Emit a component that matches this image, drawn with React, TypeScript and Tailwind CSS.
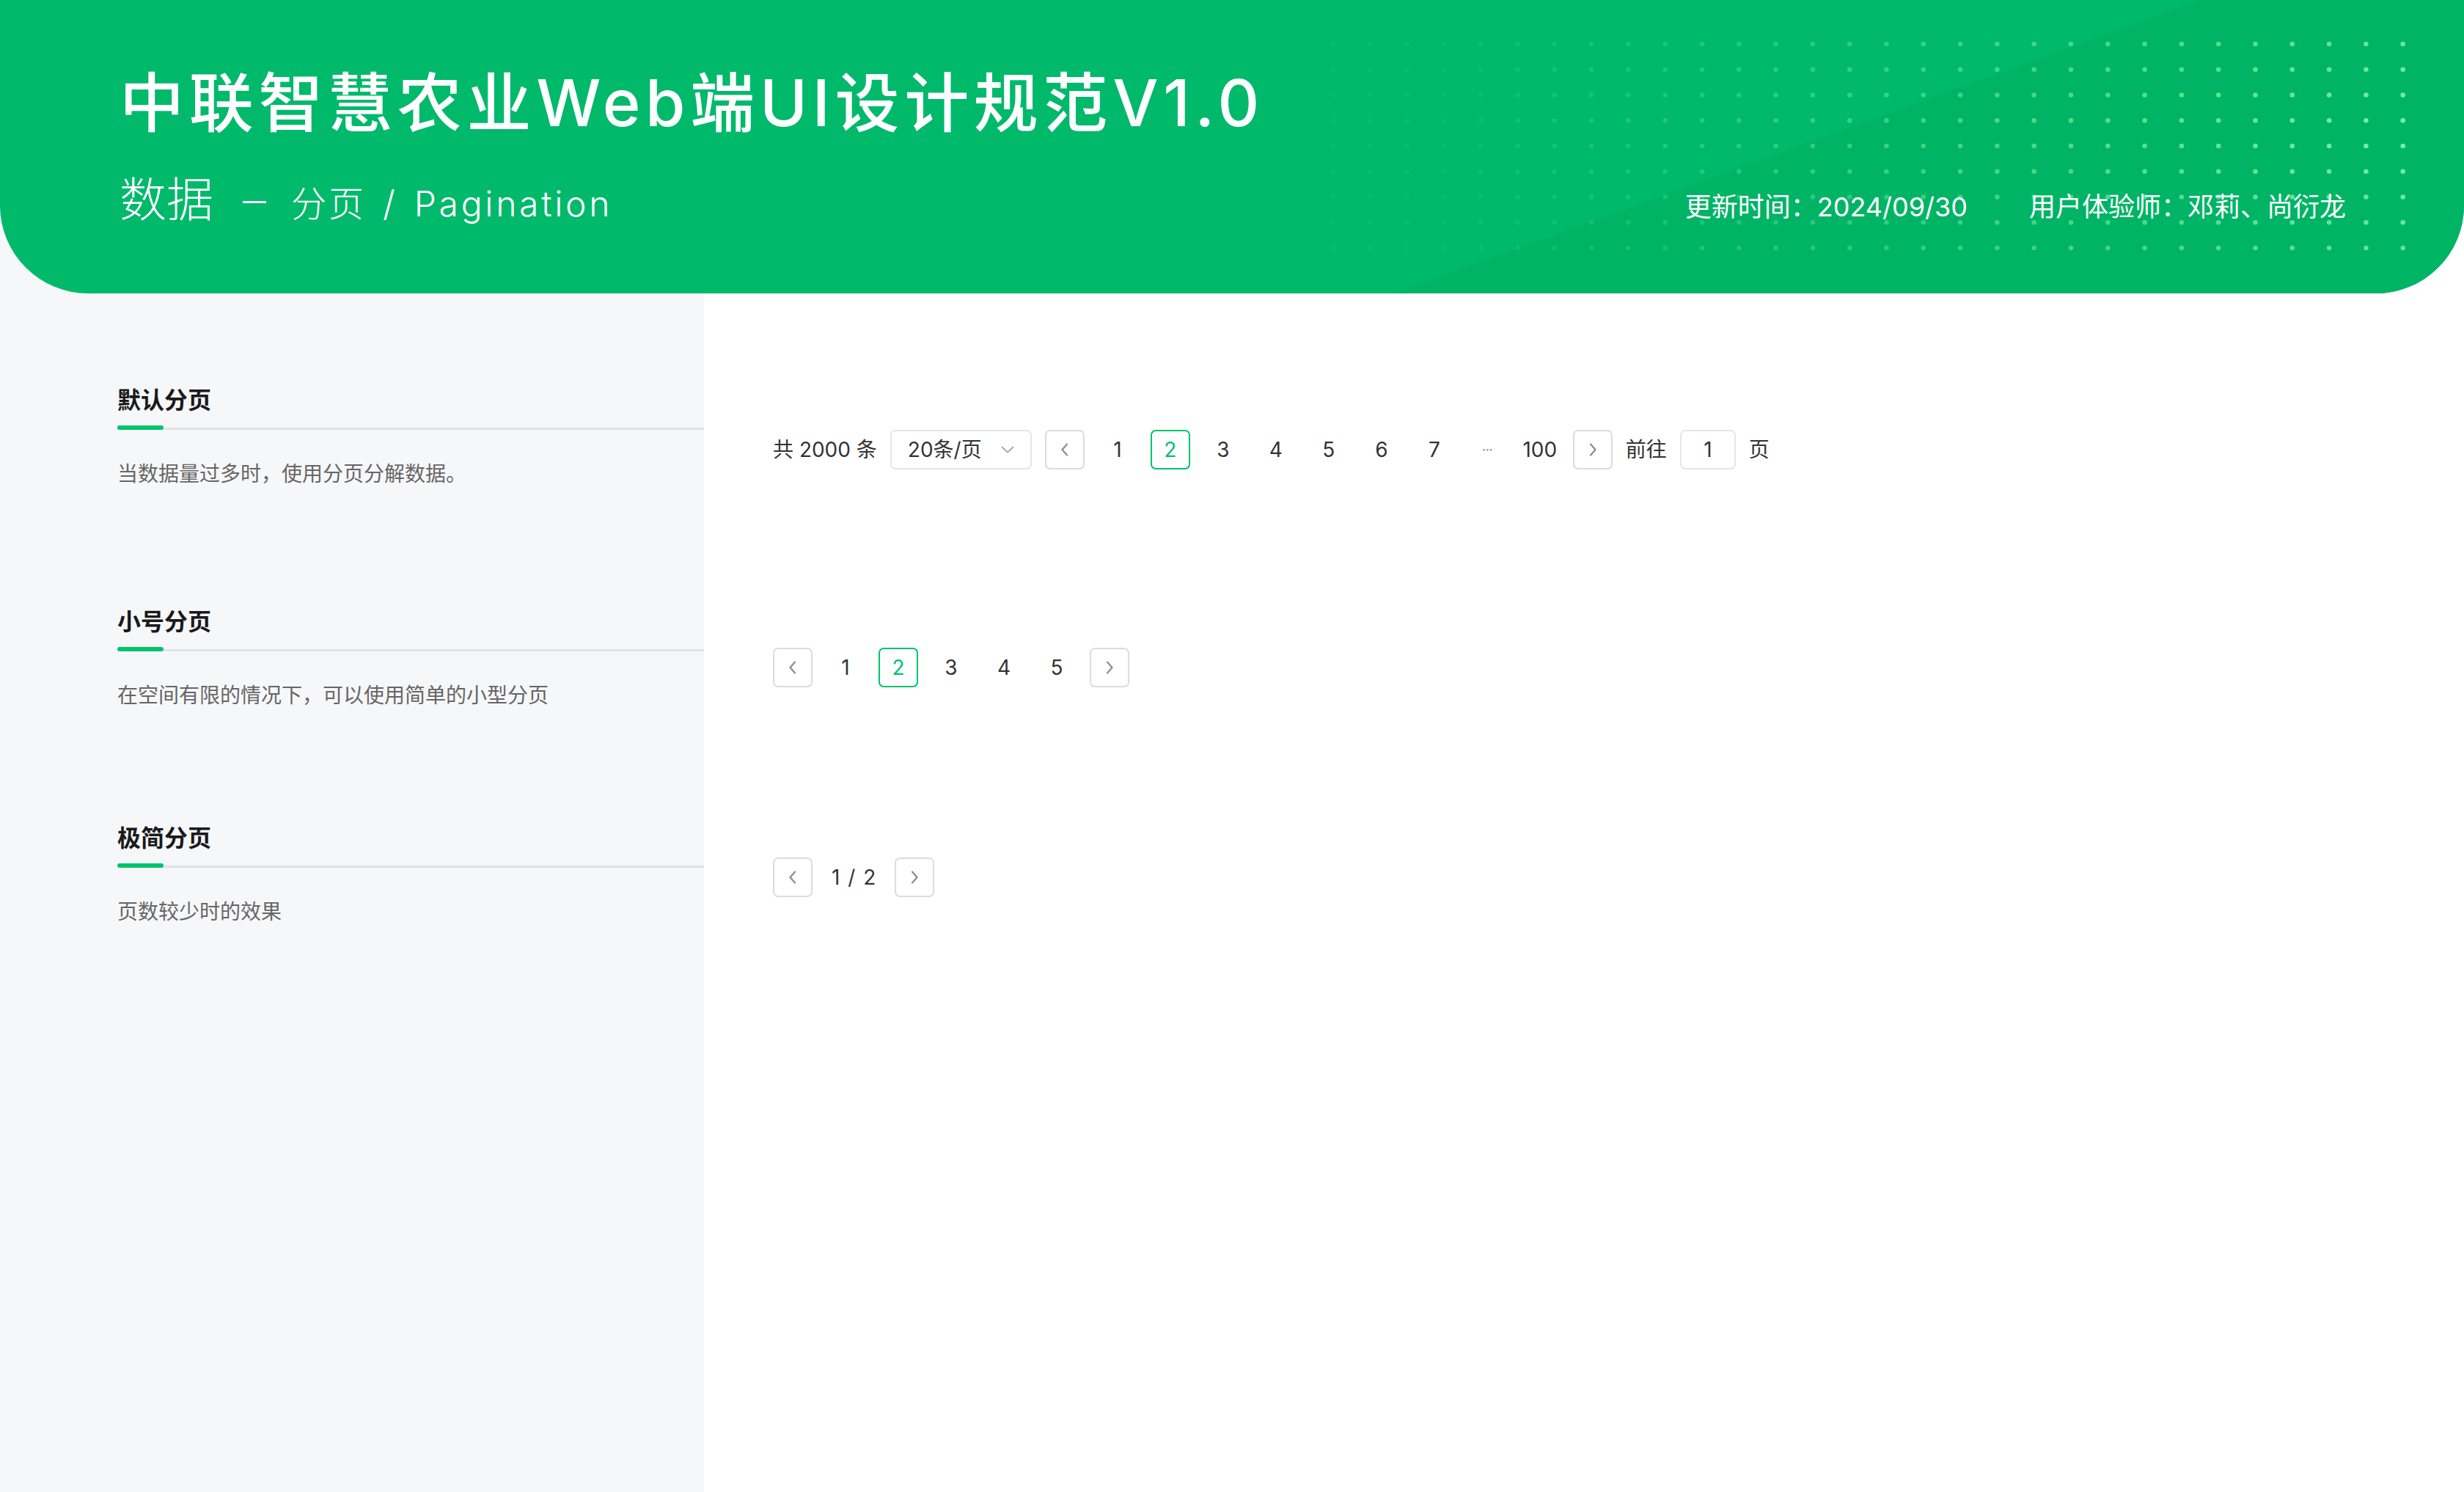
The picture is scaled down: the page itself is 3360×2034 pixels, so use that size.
import React from 'react'

// decorative dot matrix + diagonal shade in the top-right of the banner
const HeaderDecor: React.FC = () => {
  const cols = 30
  const rows = 9
  const dots: React.ReactElement[] = []
  for (let r = 0; r < rows; r++) {
    for (let c = 0; c < cols; c++) {
      const t = c / (cols - 1)
      const fade = 1 - 0.2 * Math.abs(r - 3.5) / 4.5
      const opacity = Math.max(0.06, Math.pow(t, 1.1) * 0.85 * fade)
      dots.push(
        <circle key={`${r}-${c}`} cx={1818 + c * 50.3} cy={60 + r * 34.75} r={3.3} fill="#8dfcb0" opacity={opacity} />
      )
    }
  }
  return (
    <svg className="absolute inset-0 pointer-events-none" width={3360} height={400} viewBox="0 0 3360 400">
      <polygon points="3000,0 3360,0 3360,400 1900,400" fill="#00b466" />
      {dots}
    </svg>
  )
}

const Chevron: React.FC<{ dir: 'left' | 'right' }> = ({ dir }) => (
  <svg width="12" height="18" viewBox="0 0 12 18" fill="none" stroke="#8c8c8c" strokeWidth="2.2" strokeLinecap="round" strokeLinejoin="round">
    <path d={dir === 'left' ? 'M9 1.5 L2.5 9 L9 16.5' : 'M3 1.5 L9.5 9 L3 16.5'} />
  </svg>
)

const ArrowBtn: React.FC<{ dir: 'left' | 'right' }> = ({ dir }) => (
  <div className="w-[54px] h-[54px] rounded-[7px] border-2 border-[#dcdcdc] bg-white flex items-center justify-center">
    <Chevron dir={dir} />
  </div>
)

const PageNum: React.FC<{ n: string; active?: boolean }> = ({ n, active }) => (
  <div
    className={
      active
        ? 'w-[54px] h-[54px] rounded-[7px] border-2 border-[#00c26b] text-[#00c26b] flex items-center justify-center'
        : 'w-[54px] h-[54px] text-[#333] flex items-center justify-center'
    }
  >
    {n}
  </div>
)

interface SectionProps {
  title: string
  desc: string
  className?: string
}

const Section: React.FC<SectionProps> = ({ title, desc, className }) => (
  <div className={className}>
    <h3 className="text-[32px] leading-[32px] font-bold text-[#1a1a1a]">{title}</h3>
    <div className="mt-[18px] flex items-end">
      <div className="w-[63px] h-[6px] rounded-full bg-[#00c46b]" />
      <div className="flex-1 h-[3px] bg-[#e1e2e5]" />
    </div>
    <p className="mt-[46px] text-[28px] leading-[28px] text-[#666]">{desc}</p>
  </div>
)

export default function App() {
  return (
    <div className="min-h-screen w-full font-['Inter','Noto_Sans_CJK_SC',sans-serif] bg-[linear-gradient(to_right,#f6f7f9_960px,#ffffff_960px)]">
      {/* banner */}
      <header className="relative overflow-hidden h-[400px] bg-[#00b96b] rounded-bl-[120px] rounded-br-[120px] pl-[163px] pr-[161px] pt-[96px]">
        <HeaderDecor />
        <h1 className="relative text-white text-[88px] leading-none font-medium tracking-[6.7px]">
          中联智慧农业Web端UI设计规范V1.0
        </h1>
        <div className="relative mt-[56px] flex items-baseline justify-between text-white">
          <div className="text-[48px] leading-none font-light tracking-[3px]">
            <span className="text-[64px] tracking-normal">数据</span>
            <span className="inline-block w-[32px] h-[3px] bg-white align-[18px] ml-[40px] mr-[34px]" />
            <span>分页</span>
            <span className="mx-[23px]">/</span>
            <span className="tracking-[3.7px]">Pagination</span>
          </div>
          <div className="text-[36px] leading-none flex gap-[84px]">
            <span>更新时间：2024/09/30</span>
            <span>用户体验师：邓莉、尚衍龙</span>
          </div>
        </div>
      </header>

      <div className="flex">
        {/* left descriptions */}
        <aside className="w-[960px] shrink-0 pl-[160px] pt-[130px]">
          <Section title="默认分页" desc="当数据量过多时，使用分页分解数据。" />
          <Section className="mt-[172px]" title="小号分页" desc="在空间有限的情况下，可以使用简单的小型分页" />
          <Section className="mt-[165px]" title="极简分页" desc="页数较少时的效果" />
        </aside>

        {/* right demos */}
        <main className="flex-1 pl-[94px] pt-[186px] text-[28px] text-[#333]">
          <div className="flex items-center gap-[18px]">
            <span className="whitespace-pre">共 2000 条</span>
            <div className="w-[193px] h-[54px] rounded-[7px] border-2 border-[#e4e6eb] pl-[22px] pr-[22px] flex items-center justify-between">
              <span>20条/页</span>
              <svg width="18" height="10" viewBox="0 0 18 10" fill="none" stroke="#a8a8a8" strokeWidth="1.8" strokeLinecap="round" strokeLinejoin="round">
                <path d="M1.5 1.5 L9 8.5 L16.5 1.5" />
              </svg>
            </div>
            <ArrowBtn dir="left" />
            <PageNum n="1" />
            <PageNum n="2" active />
            <PageNum n="3" />
            <PageNum n="4" />
            <PageNum n="5" />
            <PageNum n="6" />
            <PageNum n="7" />
            <div className="w-[54px] h-[54px] flex items-center justify-center text-[20px] text-[#999] tracking-[-1px]">···</div>
            <PageNum n="100" />
            <ArrowBtn dir="right" />
            <span>前往</span>
            <div className="w-[76px] h-[54px] rounded-[7px] border-2 border-[#e4e6eb] flex items-center justify-center">1</div>
            <span>页</span>
          </div>

          <div className="mt-[243px] flex items-center gap-[18px]">
            <ArrowBtn dir="left" />
            <PageNum n="1" />
            <PageNum n="2" active />
            <PageNum n="3" />
            <PageNum n="4" />
            <PageNum n="5" />
            <ArrowBtn dir="right" />
          </div>

          <div className="mt-[232px] flex items-center gap-[26px]">
            <ArrowBtn dir="left" />
            <span className="whitespace-pre">
              1<span className="mx-[3px]"> / </span>2
            </span>
            <ArrowBtn dir="right" />
          </div>
        </main>
      </div>
    </div>
  )
}
